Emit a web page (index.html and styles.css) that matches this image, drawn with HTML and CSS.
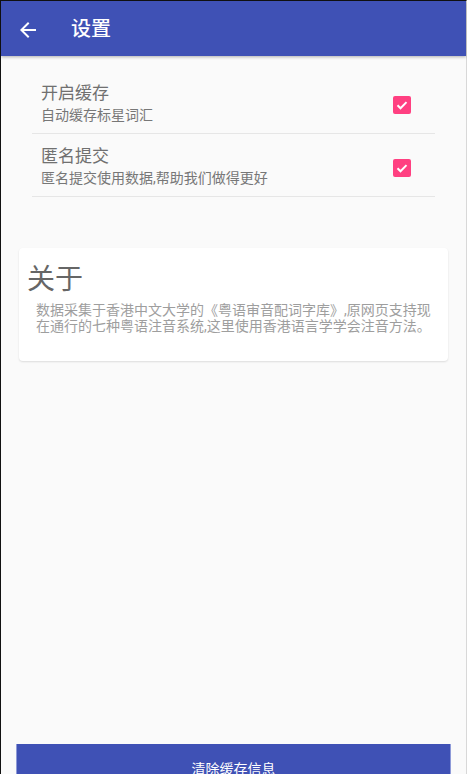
FILE: index.html
```html
<!DOCTYPE html>
<html lang="zh-CN">
<head>
<meta charset="utf-8">
<title>设置</title>
<link rel="stylesheet" href="styles.css">
</head>
<body>
<div class="screen">
  <header class="appbar">
    <span class="back">
      <svg width="24" height="24" viewBox="0 0 24 24"><path d="M20 11H7.83l5.59-5.59L12 4l-8 8 8 8 1.41-1.41L7.83 13H20v-2z" fill="#fff"/></svg>
    </span>
    <h1 class="title">设置</h1>
  </header>

  <section class="prefs">
    <div class="pref">
      <div class="pref-text">
        <div class="pref-title">开启缓存</div>
        <div class="pref-summary">自动缓存标星词汇</div>
      </div>
      <span class="check"><svg width="18" height="18" viewBox="0 0 18 18"><path d="M4.5 9.3l3 3 6-6.2" fill="none" stroke="#fff" stroke-width="2"/></svg></span>
    </div>
    <div class="pref">
      <div class="pref-text">
        <div class="pref-title">匿名提交</div>
        <div class="pref-summary">匿名提交使用数据,帮助我们做得更好</div>
      </div>
      <span class="check"><svg width="18" height="18" viewBox="0 0 18 18"><path d="M4.5 9.3l3 3 6-6.2" fill="none" stroke="#fff" stroke-width="2"/></svg></span>
    </div>
  </section>

  <section class="card">
    <h2 class="card-title">关于</h2>
    <p class="card-body">数据采集于香港中文大学的《粤语审音配词字库》,原网页支持现在通行的七种粤语注音系统,这里使用香港语言学学会注音方法。</p>
  </section>

  <div class="spacer"></div>

  <button class="clear">清除缓存信息</button>
</div>
</body>
</html>
```

FILE: styles.css
```css
html, body {
  margin: 0;
  padding: 0;
  background: #fafafa;
  overflow: hidden;
}

body {
  font-family: Roboto, "Noto Sans", "Noto Sans CJK SC", sans-serif;
}

.screen {
  height: 792px;
  display: flex;
  flex-direction: column;
  border-top: 1px solid #111;
  border-left: 1px solid #111;
  border-right: 1px solid #d8d8d8;
  box-sizing: border-box;
  background: #fafafa;
}

.appbar {
  height: 55px;
  flex: none;
  background: #3f51b5;
  display: flex;
  align-items: center;
  box-shadow: 0 1px 3px rgba(0, 0, 0, 0.3);
  position: relative;
  z-index: 1;
}

.back {
  width: 24px;
  height: 24px;
  margin-left: 15px;
  margin-top: 2px;
  display: flex;
}

.title {
  margin: 0 0 0 31px;
  font-size: 20px;
  font-weight: 500;
  color: #fff;
  line-height: 24px;
}

.prefs {
  margin: 15px 31px 0 31px;
}

.pref {
  display: flex;
  align-items: center;
  padding: 11px 0 7px 9px;
  height: 44px;
  border-bottom: 1px solid #e6e6e6;
}

.pref-text {
  flex: 1;
}

.pref-title {
  font-size: 17px;
  line-height: 22px;
  color: #707070;
}

.pref-summary {
  font-size: 14px;
  line-height: 22px;
  color: #777;
}

.check {
  width: 18px;
  height: 18px;
  border-radius: 2px;
  background: #ff4081;
  margin-right: 24px;
  margin-top: 2px;
  display: flex;
}

.card {
  margin: 51px 18px 0 18px;
  background: #fff;
  border-radius: 4px;
  box-shadow: 0 1px 2px rgba(0, 0, 0, 0.12);
  padding: 16px 10px 27px 0;
  height: 70px;
}

.card-title {
  margin: 0 0 6px 8px;
  font-size: 28px;
  font-weight: 400;
  line-height: 32px;
  color: #666;
}

.card-body {
  margin: 0 0 0 17px;
  font-size: 14px;
  line-height: 16px;
  color: #9e9e9e;
}

.spacer {
  flex: 1;
}

.clear {
  flex: none;
  height: 48px;
  margin: 0 15px;
  border: none;
  border-left: 1px solid #8e9ad8;
  border-right: 1px solid #8e9ad8;
  background: #3f51b5;
  color: #fff;
  font-family: inherit;
  font-size: 14px;
  padding: 0;
}
```
